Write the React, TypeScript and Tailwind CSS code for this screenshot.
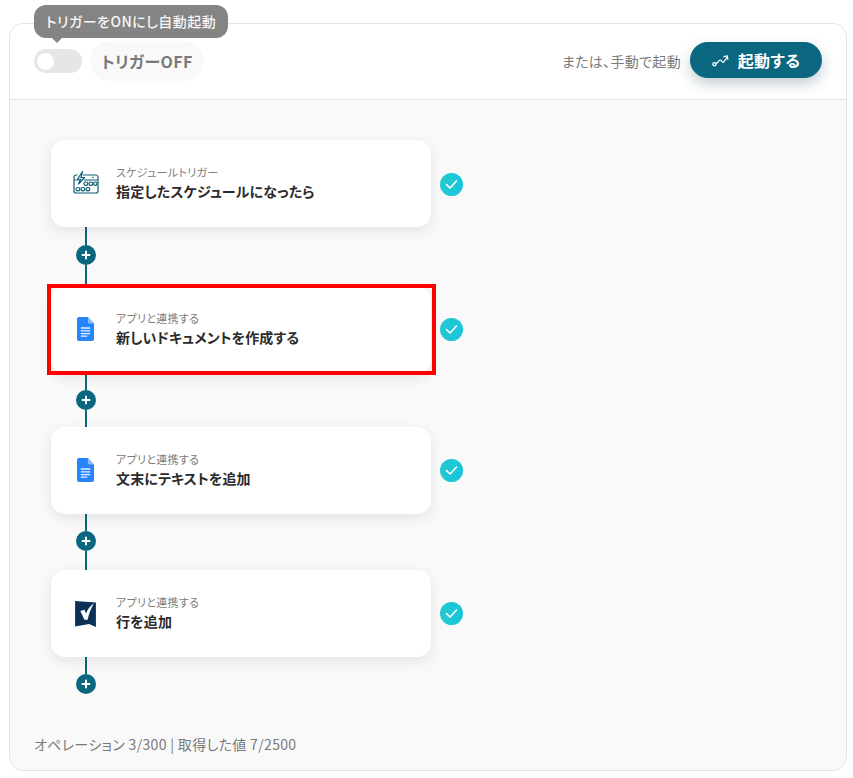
import React from "react";

function Check() {
  return (
    <div className="w-[23px] h-[23px] rounded-full bg-gradient-to-r from-[#25c9d0] to-[#15c5dc] flex items-center justify-center shrink-0">
      <svg width="13" height="11" viewBox="0 0 13 11" fill="none">
        <path d="M1.5 5.5 L5 9 L11.5 2" stroke="#fff" strokeWidth="1.6" strokeLinecap="round" strokeLinejoin="round" />
      </svg>
    </div>
  );
}

function DocIcon() {
  return (
    <svg width="17" height="24" viewBox="0 0 18 24" preserveAspectRatio="none">
      <path d="M2 0 H11.5 L18 6.5 V22 a2 2 0 0 1 -2 2 H2 a2 2 0 0 1 -2 -2 V2 a2 2 0 0 1 2 -2 Z" fill="#2684fc" />
      <path d="M11.5 0 L18 6.5 H13 a1.5 1.5 0 0 1 -1.5 -1.5 Z" fill="#8ab8fb" />
      <path d="M4 11 H14 M4 13.8 H14 M4 16.6 H14 M4 19.2 H11" stroke="#e6f0ff" strokeWidth="1.3" />
    </svg>
  );
}

function ScheduleIcon() {
  return (
    <svg width="26" height="23" viewBox="0 0 26 23" fill="none" stroke="#0f6076" strokeWidth="1.2">
      <path d="M4.5 4 H3 a2 2 0 0 0 -2 2 V20 a2 2 0 0 0 2 2 H23 a2 2 0 0 0 2 -2 V6 a2 2 0 0 0 -2 -2 H10" />
      <path d="M1 9 H6 M11 9 H25" />
      <path d="M9.5 0.7 L4.5 8 H7.5 L5.5 13 L11.5 6.5 H8 Z" fill="#fff" strokeLinejoin="round" />
      <circle cx="20" cy="6.5" r="0.8" fill="#0f6076" stroke="none" />
      <rect x="11" y="11" width="3.8" height="3.4" rx="1.6" />
      <rect x="16" y="11" width="3.8" height="3.4" rx="1.6" />
      <rect x="20.6" y="11" width="3.4" height="3.4" rx="1.6" />
      <rect x="3" y="16.5" width="3.8" height="3.4" rx="1.6" />
      <rect x="8" y="16.5" width="3.8" height="3.4" rx="1.6" />
      <rect x="13" y="16.5" width="3.8" height="3.4" rx="1.6" />
    </svg>
  );
}

function SmartsheetIcon() {
  return (
    <svg width="21" height="26" viewBox="0 0 20 25">
      <path d="M0 0 L20 1.5 V25 L13.5 22 L0 24.5 Z" fill="#0b3157" />
      <path d="M5 9.5 L9 8.5 L10.5 12 C12 8 14.5 5 18 2.5 C15.5 7 13.5 11.5 12 18 L9 18 Z" fill="#fff" />
    </svg>
  );
}

function Plus() {
  return (
    <div className="w-5 h-5 rounded-full bg-[#0b667f] flex items-center justify-center">
      <svg width="10" height="10" viewBox="0 0 10 10">
        <path d="M5 1.5 V8.5 M1.5 5 H8.5" stroke="#fff" strokeWidth="2" strokeLinecap="round" />
      </svg>
    </div>
  );
}

function Card({ icon, iconClass, label, title, active, checkClass }: { icon: React.ReactNode; iconClass: string; label: string; title: string; active?: boolean; checkClass: string }) {
  return (
    <div className="flex items-center">
      <div className="relative w-[380px] h-[87px] bg-white rounded-[14px] shadow-[0_4px_14px_rgba(0,0,0,0.09)] flex items-center shrink-0">
        <div className={"w-[64px] flex justify-center shrink-0 pl-[5px] " + iconClass}>{icon}</div>
        <div className={"flex flex-col ml-[1px] " + (active ? "-mt-[2px]" : "mt-[1px]")}>
          <span className="text-[11px] leading-[14px] tracking-[0.3px] text-[#7b7b7b]">{label}</span>
          <span className="text-[14px] leading-[24px] tracking-[0.15px] font-bold text-[#2b2b2b]">{title}</span>
        </div>
        {active && <div className="absolute -left-1 -top-[3px] w-[389px] h-[91px] border-[4px] border-[#ff0000]" />}
      </div>
      <div className={"ml-[9px] " + checkClass}>
        <Check />
      </div>
    </div>
  );
}

function Connector({ top, bottom }: { top: string; bottom: string }) {
  return (
    <div className="w-[70px] flex flex-col items-center">
      <div className={"w-[2px] bg-[#0b667f] " + top} />
      <Plus />
      <div className={"w-[2px] bg-[#0b667f] " + bottom} />
    </div>
  );
}

export default function App() {
  return (
    <div
      className="w-[853px] h-[778px] bg-white pt-[23px] pl-[9px] [font-feature-settings:'palt']"
      style={{ fontFamily: '"Noto Sans CJK JP", "Noto Sans", sans-serif' }}
    >
      <div className="relative w-[838px] h-[748px] rounded-[14px] border border-[#e4e4e4] bg-[#f9f9f9] flex flex-col overflow-visible">
        <div className="h-[76px] shrink-0 bg-white rounded-t-[14px] border-b border-[#e4e4e4] flex items-center pl-[24px] pr-[24px]">
          <div className="w-[48px] h-6 rounded-full bg-[#e6e6e6] flex items-center pl-[3px] mt-[-1px]">
            <div className="w-[17px] h-[17px] rounded-full bg-white" />
          </div>
          <div className="ml-2 h-10 w-[114px] rounded-full bg-[#f9f9f9] flex items-center justify-center text-[16px] tracking-[0.4px] font-bold text-[#7a7a7a] mt-[-2px]">
            トリガーOFF
          </div>
          <div className="ml-auto text-[14px] tracking-[0.33px] text-[#7a7a7a] mt-[-1px]">または、手動で起動</div>
          <div className="ml-[9px] w-[132px] h-9 mt-[-3px] rounded-full bg-[#0b667f] shadow-[0_6px_14px_rgba(11,60,80,0.25)] flex items-center justify-center gap-[9px] text-white text-[16px] tracking-[0.4px] font-bold">
            <svg width="17" height="13" viewBox="0 0 17 13" fill="none" stroke="#fff" strokeWidth="1.3" strokeLinecap="round" strokeLinejoin="round">
              <circle cx="2.4" cy="10.2" r="1.6" />
              <path d="M4 9.6 C6 9 6.4 6 8.4 6.2 C10.4 6.4 10 9.2 11.6 8 C13 6.8 14 5 15 3" />
              <path d="M11.8 2.6 L15.2 1.8 L15.8 5.2" />
            </svg>
            起動する
          </div>
        </div>

        <div className="absolute left-[24px] top-[-19px] h-[33px] w-[194px] rounded-[12px] bg-[#848484] text-white/95 text-[14px] tracking-[0.45px] font-medium flex items-center justify-center">
          トリガーをONにし自動起動
          <div className="absolute left-[17px] top-[32px] w-0 h-0 border-x-[6px] border-x-transparent border-t-[6px] border-t-[#848484]" />
        </div>

        <div className="flex-1 flex flex-col pl-[41px] pt-[40px]">
          <Card icon={<ScheduleIcon />} iconClass="-mt-[2px]" label="スケジュールトリガー" title="指定したスケジュールになったら" checkClass="mt-[1px]" />
          <Connector top="h-[18px]" bottom="h-[22px]" />
          <Card icon={<DocIcon />} iconClass="-mt-[3px]" label="アプリと連携する" title="新しいドキュメントを作成する" active checkClass="-mt-[2px]" />
          <Connector top="h-4" bottom="h-[17px]" />
          <Card icon={<DocIcon />} iconClass="-mt-[2px]" label="アプリと連携する" title="文末にテキストを追加" checkClass="-mt-[1px]" />
          <Connector top="h-[17px]" bottom="h-[19px]" />
          <Card icon={<SmartsheetIcon />} iconClass="" label="アプリと連携する" title="行を追加" checkClass="-mt-[1px]" />
          <Connector top="h-[17px]" bottom="h-0" />
          <div className="-ml-[17px] mt-[40px] text-[14px] tracking-[0.33px] leading-5 text-[#7a7a7a]">オペレーション 3/300 | 取得した値 7/2500</div>
        </div>
      </div>
    </div>
  );
}
